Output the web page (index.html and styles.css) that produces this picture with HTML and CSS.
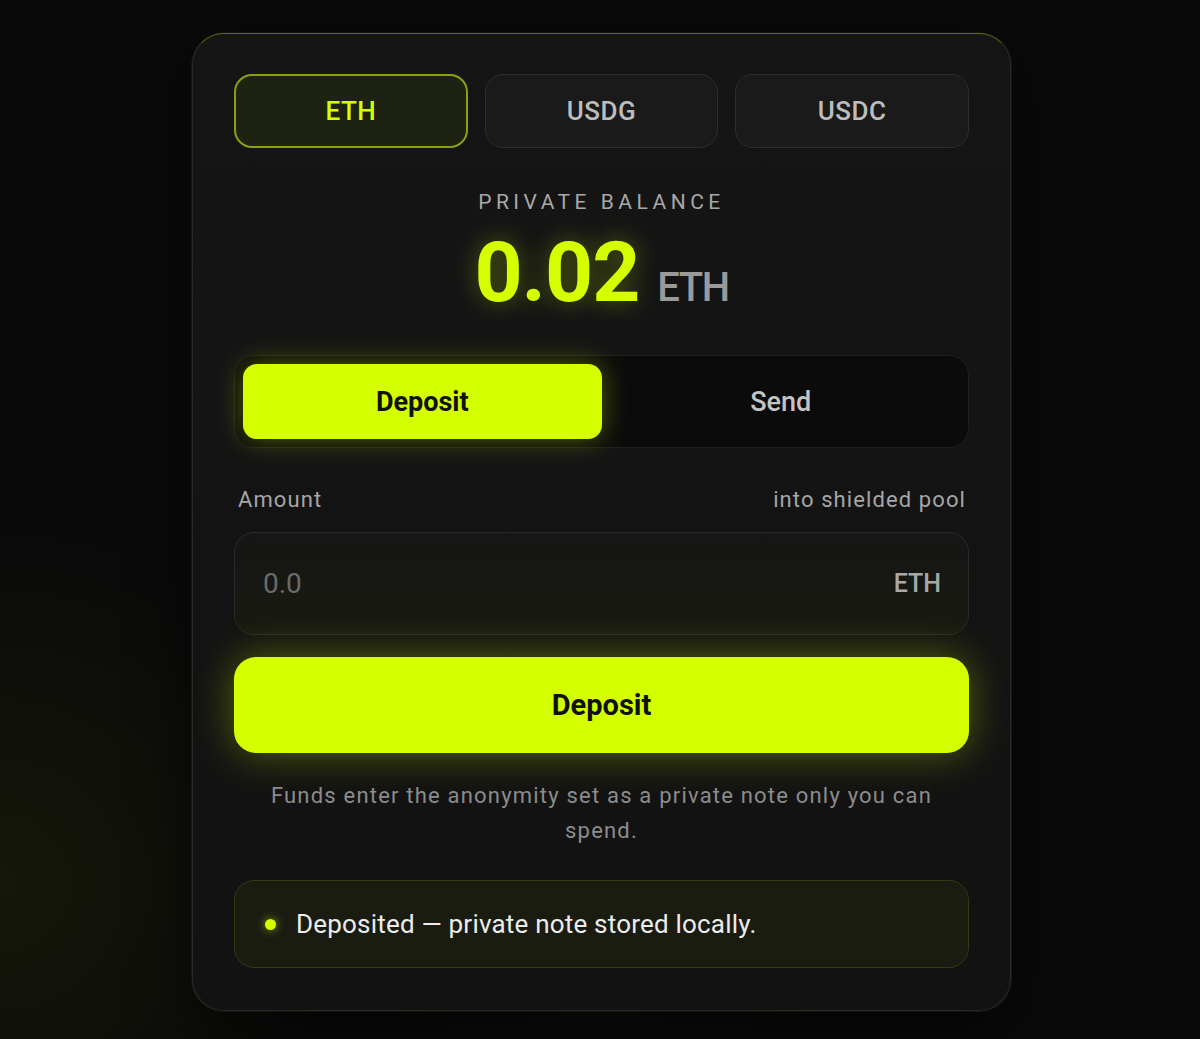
FILE: index.html
```html
<!DOCTYPE html>
<html lang="en">
<head>
  <meta charset="UTF-8" />
  <meta name="viewport" content="width=device-width, initial-scale=1.0" />
  <title>Shielded Pool</title>
  <link rel="stylesheet" href="styles.css">
</head>
<body>
  <main class="page">
    <!-- Wallet card -->
    <section class="wallet-card">
      <!-- Token picker -->
      <div class="token-tabs">
        <button class="token-tab active">ETH</button>
        <button class="token-tab">USDG</button>
        <button class="token-tab">USDC</button>
      </div>

      <!-- Balance -->
      <div class="balance">
        <div class="balance-label">PRIVATE BALANCE</div>
        <div class="balance-value">
          <span class="balance-amount">0.02</span>
          <span class="balance-unit">ETH</span>
        </div>
      </div>

      <!-- Mode switch -->
      <div class="mode-switch">
        <button class="mode-btn active">Deposit</button>
        <button class="mode-btn">Send</button>
      </div>

      <!-- Amount field -->
      <div class="field-head">
        <span>Amount</span>
        <span>into shielded pool</span>
      </div>
      <label class="amount-field">
        <input type="text" placeholder="0.0">
        <span class="amount-unit">ETH</span>
      </label>

      <button class="primary-btn">Deposit</button>

      <p class="hint">Funds enter the anonymity set as a private note only you can spend.</p>

      <!-- Status message -->
      <div class="status">
        <span class="status-dot"></span>
        <span>Deposited — private note stored locally.</span>
      </div>
    </section>
  </main>
</body>
</html>
```

FILE: styles.css
```css
/* Base */
* {
  padding: 0;
  margin: 0;
  box-sizing: border-box;
}

body {
  background-color: #0a0a0a;
  background-image:
    radial-gradient(ellipse 500px 500px at 0% 85%, rgba(60, 70, 10, 0.22), transparent 70%),
    radial-gradient(ellipse 600px 400px at 50% 75%, rgba(90, 110, 0, 0.12), transparent 70%);
  color: #e6e6e6;
  font-family: "Roboto", "Liberation Sans", sans-serif;
  min-height: 1039px;
}

.page {
  display: flex;
  justify-content: center;
  padding: 33px 0 0 3px;
}

/* Card */
.wallet-card {
  width: 819px;
  padding: 40px 41px 42px;
  border-radius: 32px;
  background: linear-gradient(180deg, #151515 0%, #131313 60%, #121212 100%);
  border: 1px solid #2a2a2a;
  border-top-color: #5a6a18;
  box-shadow: 0 0 0 1px rgba(120, 140, 20, 0.12), 0 20px 60px rgba(0, 0, 0, 0.6);
}

button {
  font-family: inherit;
  cursor: pointer;
}

/* Token tabs */
.token-tabs {
  display: grid;
  grid-template-columns: repeat(3, 1fr);
  gap: 17px;
}

.token-tab {
  height: 74px;
  border-radius: 18px;
  border: 1.5px solid #2e2e2e;
  background: #1a1a1a;
  color: #bdbdbd;
  font-size: 26px;
  font-weight: 500;
  letter-spacing: 0.5px;
}

.token-tab.active {
  background: #1e2210;
  border: 2px solid #8aa012;
  color: #d4ff00;
}

/* Balance */
.balance {
  text-align: center;
  margin-top: 40px;
}

.balance-label {
  font-size: 21px;
  letter-spacing: 4.5px;
  color: #a8a8a8;
  line-height: 28px;
}

.balance-value {
  display: flex;
  justify-content: center;
  align-items: baseline;
  gap: 18px;
  margin-top: 12px;
  line-height: 90px;
}

.balance-amount {
  font-size: 84px;
  font-weight: 700;
  letter-spacing: -1px;
  color: #d4ff00;
  text-shadow: 0 0 24px rgba(212, 255, 0, 0.35);
}

.balance-unit {
  font-size: 40px;
  font-weight: 500;
  letter-spacing: -1.5px;
  color: #9a9a9a;
}

/* Mode switch */
.mode-switch {
  display: grid;
  grid-template-columns: 1fr 1fr;
  margin-top: 22px;
  padding: 8px;
  height: 93px;
  border-radius: 20px;
  background: #0b0b0b;
  border: 1px solid #1f1f1f;
}

.mode-btn {
  border: none;
  border-radius: 14px;
  background: transparent;
  color: #c4c4c4;
  font-size: 27px;
  font-weight: 500;
}

.mode-btn.active {
  background: #d4ff00;
  color: #111;
  font-weight: 700;
  box-shadow: 0 0 28px rgba(212, 255, 0, 0.35);
}

/* Amount */
.field-head {
  display: flex;
  justify-content: space-between;
  margin-top: 38px;
  padding: 0 3px 0 4px;
  font-size: 22px;
  color: #a6a6a6;
  line-height: 28px;
  letter-spacing: 1.1px;
}

.amount-field {
  display: flex;
  align-items: center;
  justify-content: space-between;
  margin-top: 18px;
  height: 103px;
  padding: 0 27px 0 28px;
  border-radius: 20px;
  background: linear-gradient(180deg, #161616 0%, #171a10 100%);
  border: 1.5px solid #2a2a2a;
}

.amount-field input {
  flex: 1;
  background: transparent;
  border: none;
  outline: none;
  font-family: inherit;
  font-size: 28px;
  color: #e6e6e6;
}

.amount-field input::placeholder {
  color: #6a6a6a;
}

.amount-unit {
  font-size: 25px;
  font-weight: 500;
  color: #a8a8a8;
}

/* Primary action */
.primary-btn {
  width: 100%;
  height: 96px;
  margin-top: 22px;
  border: none;
  border-radius: 22px;
  background: #d4ff00;
  color: #111;
  font-size: 29px;
  font-weight: 700;
  box-shadow: 0 0 40px rgba(212, 255, 0, 0.35);
}

.hint {
  margin: 25px auto 0;
  max-width: 700px;
  text-align: center;
  font-size: 22px;
  line-height: 35px;
  letter-spacing: 1.2px;
  color: #8c8c8c;
}

/* Status */
.status {
  display: flex;
  align-items: center;
  gap: 20px;
  margin-top: 32px;
  height: 88px;
  padding: 0 30px;
  border-radius: 20px;
  background: #1a1c12;
  border: 1.5px solid #333a14;
  font-size: 26px;
  letter-spacing: 0.2px;
  color: #ececec;
}

.status-dot {
  width: 11px;
  height: 11px;
  border-radius: 50%;
  background: #d4ff00;
  box-shadow: 0 0 10px rgba(212, 255, 0, 0.6);
}
```
